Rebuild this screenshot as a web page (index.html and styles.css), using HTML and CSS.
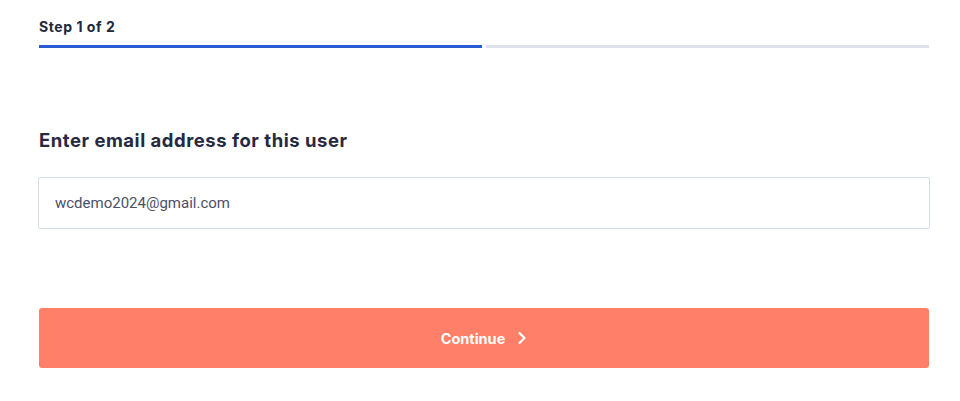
FILE: index.html
```html
<!DOCTYPE html>
<html>
<head>
<meta charset="utf-8">
<link rel="stylesheet" href="styles.css">
</head>
<body>
<main class="wizard">
  <div class="step-label">Step 1 of 2</div>
  <div class="progress">
    <span class="seg seg-active"></span>
    <span class="seg"></span>
  </div>
  <h2 class="title">Enter email address for this user</h2>
  <div class="field">wcdemo2024@gmail.com</div>
  <button class="btn">
    <span>Continue</span>
    <svg class="chev" width="10" height="14" viewBox="0 0 10 14"><path d="M2.5 2 L7.5 7 L2.5 12" fill="none" stroke="#fff" stroke-width="2.2" stroke-linecap="round" stroke-linejoin="round"/></svg>
  </button>
</main>
</body>
</html>
```
FILE: styles.css
```css
html, body { margin: 0; padding: 0; background: #fff; }
body { font-family: Inter, "Noto Sans", sans-serif; }
.wizard {
  margin: 0 31px 0 39px;
  padding-top: 17px;
  display: flex;
  flex-direction: column;
}
.step-label {
  font-size: 14px;
  font-weight: 700;
  color: #23273a;
  line-height: 20px;
  letter-spacing: 0.55px;
}
.progress {
  margin-top: 8px;
  display: flex;
  gap: 4px;
}
.seg {
  flex: 1;
  height: 3px;
  background: #dde3e8;
}
.seg-active { background: #2a5bd4; }
.title {
  margin: 80px 0 0;
  font-size: 18.5px;
  font-weight: 700;
  color: #262a40;
  line-height: 24px;
  letter-spacing: 0.52px;
}
.field {
  margin: 25px -1px 0;
  height: 50px;
  border: 1px solid #d5dde6;
  border-radius: 2px;
  padding: 0 16px;
  display: flex;
  align-items: center;
  font-family: Roboto, "Liberation Sans", sans-serif;
  font-size: 15px;
  color: #4b5068;
}
.btn {
  margin-top: 79px;
  height: 60px;
  border: none;
  border-radius: 3px;
  background: #ff7f69;
  color: #fff;
  font-family: Inter, "Noto Sans", sans-serif;
  font-size: 14.5px;
  font-weight: 700;
  display: flex;
  align-items: center;
  justify-content: center;
  gap: 12px;
  padding: 0;
}
.chev { display: block; }
```
